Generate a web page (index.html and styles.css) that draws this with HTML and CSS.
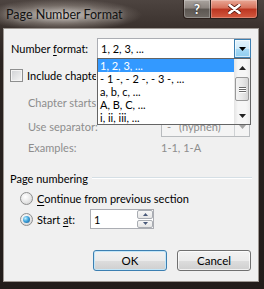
FILE: index.html
```html
<!DOCTYPE html>
<html lang="en">
<head>
    <meta charset="UTF-8">
    <title>Page Number Format</title>
    <link rel="stylesheet" href="styles.css">
</head>
<body>
    <div class="window">
        <!-- Title bar -->
        <div class="titlebar">
            <span class="title">Page Number Format</span>
            <div class="caption-buttons">
                <div class="cap-btn help">?</div>
                <div class="cap-btn close">
                    <svg width="13" height="10" viewBox="0 0 13 10"><path d="M1.5 1 L11.5 9 M11.5 1 L1.5 9" stroke="#5a1a10" stroke-width="4.2" stroke-linecap="round"/><path d="M1.5 1 L11.5 9 M11.5 1 L1.5 9" stroke="#fff" stroke-width="2.6" stroke-linecap="round"/></svg>
                </div>
            </div>
        </div>

        <div class="client">
            <!-- Number format -->
            <div class="row row-format">
                <span class="label label-format">Number <u>f</u>ormat:</span>
                <div class="combo combo-format">
                    <span class="combo-text">1, 2, 3, ...</span>
                    <span class="combo-btn combo-btn-hot">
                        <svg width="7" height="4" viewBox="0 0 7 4"><path d="M0 0h7L3.5 4z" fill="#000"/></svg>
                    </span>

                    <div class="droplist">
                        <ul class="options">
                            <li class="selected">1, 2, 3, ...</li>
                            <li>- 1 -, - 2 -, - 3 -, ...</li>
                            <li>a, b, c, ...</li>
                            <li>A, B, C, ...</li>
                            <li>i, ii, iii, ...</li>
                        </ul>
                        <div class="scrollbar">
                            <span class="sb-arrow">
                                <svg width="7" height="4" viewBox="0 0 7 4"><path d="M0 4h7L3.5 0z" fill="#222"/></svg>
                            </span>
                            <span class="sb-thumb"><i></i><i></i><i></i></span>
                            <span class="sb-space"></span>
                            <span class="sb-arrow">
                                <svg width="7" height="4" viewBox="0 0 7 4"><path d="M0 0h7L3.5 4z" fill="#222"/></svg>
                            </span>
                        </div>
                    </div>
                </div>
            </div>

            <!-- Include chapter number -->
            <div class="row row-check">
                <span class="checkbox"></span>
                <span class="label label-clip">Include chapter <u>n</u>umber</span>
            </div>

            <div class="row row-indent row-chapter">
                <span class="label label-clip disabled">Chapter starts with style:</span>
            </div>

            <div class="row row-indent row-separator">
                <span class="label label-wide disabled">Use separator:</span>
                <div class="combo combo-separator">
                    <span class="combo-text disabled"><span class="dash">-</span>(hyphen)</span>
                    <span class="combo-btn combo-btn-off">
                        <svg width="7" height="4" viewBox="0 0 7 4"><path d="M0 0h7L3.5 4z" fill="#a3a3a3"/></svg>
                    </span>
                </div>
            </div>

            <div class="row row-indent row-examples">
                <span class="label label-wide disabled">Examples:</span>
                <span class="label disabled">1-1, 1-A</span>
            </div>

            <!-- Page numbering group -->
            <div class="row row-group">
                <span class="label">Page numbering</span>
                <span class="group-line"></span>
            </div>

            <div class="row row-radio">
                <span class="radio"></span>
                <span class="label"><u>C</u>ontinue from previous section</span>
            </div>

            <div class="row row-radio row-start">
                <span class="radio checked"></span>
                <span class="label label-start">Start <u>a</u>t:</span>
                <div class="spin">
                    <span class="spin-text">1</span>
                    <span class="spin-btns">
                        <span class="spin-btn">
                            <svg width="5" height="3" viewBox="0 0 5 3"><path d="M0 3h5L2.5 0z" fill="#4a5a7a"/></svg>
                        </span>
                        <span class="spin-btn">
                            <svg width="5" height="3" viewBox="0 0 5 3"><path d="M0 0h5L2.5 3z" fill="#4a5a7a"/></svg>
                        </span>
                    </span>
                </div>
            </div>

            <div class="row row-buttons">
                <button class="button default">OK</button>
                <button class="button">Cancel</button>
            </div>
        </div>
    </div>
</body>
</html>
```

FILE: styles.css
```css
/* Windows 7 style dialog */
* {
    box-sizing: border-box;
}

body {
    margin: 0;
    width: 264px;
    height: 289px;
    overflow: hidden;
    background: #2a2320;
    font-family: 'Lato', sans-serif;
    font-size: 11px;
    color: #000;
}

.window {
    height: 289px;
    display: flex;
    flex-direction: column;
    background:
        radial-gradient(ellipse 80px 16px at 62px 15px, rgba(205, 199, 193, 0.95), rgba(150, 141, 134, 0.55) 60%, rgba(60, 50, 45, 0) 100%),
        linear-gradient(180deg, #4d4440 0, #3a312d 28px, #2a2320 60px, #221c1a 100%);
}

/* Title bar */
.titlebar {
    height: 29px;
    flex-shrink: 0;
    display: flex;
    justify-content: space-between;
    align-items: flex-start;
    padding: 0 6px;
}

.title {
    line-height: 30px;
    font-size: 12.5px;
    color: #111;
    text-shadow: 0 0 6px rgba(255, 255, 255, 0.6);
}

.caption-buttons {
    display: flex;
    height: 19px;
}

.cap-btn {
    height: 19px;
    border: 1px solid #2b1f1b;
    border-top: none;
    display: flex;
    align-items: center;
    justify-content: center;
    box-shadow: inset 0 0 0 1px rgba(255, 255, 255, 0.25);
}

.help {
    width: 28px;
    border-radius: 0 0 0 4px;
    background: linear-gradient(180deg, #aaa49f 0, #8b847f 45%, #5c5651 50%, #6f6964 100%);
    color: #fff;
    font-weight: bold;
    font-size: 13px;
    text-shadow: 0 0 2px #222;
}

.close {
    width: 48px;
    margin-left: -1px;
    border-radius: 0 0 4px 0;
    background: linear-gradient(180deg, #e9a896 0, #d6705a 45%, #bb3520 50%, #d45a40 100%);
}

/* Client area */
.client {
    height: 252px;
    margin: 0 6px 0 4px;
    padding-top: 9px;
    background: #f0f0f0;
    box-shadow: 0 0 0 1px #9d9792;
    display: flex;
    flex-direction: column;
}

.row {
    display: flex;
    align-items: center;
    height: 20px;
    padding-left: 7px;
}

.label {
    white-space: nowrap;
}

/* text that runs under the open list is cut where the list starts */
.label-clip {
    overflow: hidden;
}

.row-check .label-clip {
    width: 69px;
}

.row-chapter .label-clip {
    width: 68px;
}

.label u {
    text-decoration-thickness: 1px;
    text-underline-offset: 2px;
}

.disabled {
    color: #8d8d8d;
}

.row-format {
    height: 21px;
}

.label-format {
    width: 86px;
}

.row-check {
    height: 21px;
    margin-top: 6px;
    padding-left: 6px;
}

.row-indent {
    padding-left: 24px;
}

.row-chapter {
    margin-top: 6px;
}

.row-separator {
    height: 21px;
    margin-top: 4px;
}

.label-wide {
    width: 133px;
}

.row-group {
    margin-top: 11px;
    padding-left: 6px;
    padding-right: 6px;
}

.group-line {
    flex: 1;
    height: 2px;
    margin: 0 0 0 4px;
    border-top: 1px solid #d5dfe5;
    border-bottom: 1px solid #fff;
}

.row-radio {
    padding-left: 16px;
}

.row-start {
    margin-top: 1px;
}

.label-start {
    width: 53px;
}

.row-buttons {
    height: 21px;
    margin-top: 21px;
    padding-right: 7px;
    justify-content: flex-end;
    gap: 10px;
}

/* Combo boxes */
.combo {
    position: relative;
    height: 21px;
    display: flex;
    align-items: center;
    border: 1px solid #abadb3;
    background: #fff;
}

.combo-format {
    width: 154px;
}

.combo-separator {
    width: 89px;
    border-color: #b8bbbe;
    background: #f4f4f4;
}

.combo-text {
    flex: 1;
    padding-left: 3px;
    white-space: nowrap;
}

.dash {
    display: inline-block;
    width: 14px;
    padding-left: 2px;
}

.combo-btn {
    width: 17px;
    height: 19px;
    display: flex;
    align-items: center;
    justify-content: center;
}

.combo-btn-hot {
    border: 1px solid #3c7fb1;
    background: linear-gradient(180deg, #e3f3fc 0, #cfeafa 50%, #a9daf5 51%, #8fcdef 100%);
    box-shadow: inset 0 0 0 1px rgba(255, 255, 255, 0.6);
    margin-right: -1px;
}

.combo-btn-off {
    width: 15px;
    border-left: 1px solid #cfd2d4;
}

/* Dropdown list over the dialog */
.droplist {
    position: absolute;
    top: 19px;
    left: -1px;
    width: 154px;
    height: 67px;
    z-index: 5;
    display: flex;
    background: #fff;
    border: 1px solid #646464;
}

.options {
    flex: 1;
    margin: 0;
    padding: 0;
    list-style: none;
}

.options li {
    height: 13px;
    line-height: 13px;
    padding-left: 2px;
    white-space: nowrap;
    overflow: hidden;
}

.options li.selected {
    background: #3399ff;
    color: #fff;
}

.scrollbar {
    width: 16px;
    display: flex;
    flex-direction: column;
    background: linear-gradient(90deg, #e4e4e4 0, #f6f6f6 25%, #f6f6f6 75%, #ececec 100%);
}

.sb-arrow {
    height: 17px;
    display: flex;
    align-items: center;
    justify-content: center;
}

.sb-thumb {
    height: 24px;
    margin: 1px 1px 0;
    border: 1px solid #999;
    border-radius: 2px;
    background: linear-gradient(90deg, #f3f3f3 0, #e8e8e8 50%, #d6d6d6 100%);
    display: flex;
    flex-direction: column;
    align-items: center;
    justify-content: center;
    gap: 1px;
}

.sb-thumb i {
    width: 7px;
    height: 1px;
    background: #6a6a6a;
    box-shadow: 0 1px 0 #fff;
}

.sb-space {
    flex: 1;
}

/* Checkbox and radio buttons */
.checkbox {
    width: 13px;
    height: 13px;
    margin-right: 4px;
    border: 1px solid #8e8f8f;
    background: linear-gradient(135deg, #cfd1d4 0, #f6f6f6 100%);
    box-shadow: inset 0 0 0 1px #f4f4f4;
}

.radio {
    position: relative;
    width: 13px;
    height: 13px;
    margin-right: 4px;
    border-radius: 50%;
    border: 1px solid #8e8f8f;
    background: radial-gradient(circle at 40% 35%, #ffffff 0, #e6e6e6 55%, #c9c9c9 100%);
}

.radio.checked::after {
    content: '';
    position: absolute;
    top: 2px;
    left: 2px;
    width: 7px;
    height: 7px;
    border-radius: 50%;
    background: radial-gradient(circle at 35% 35%, #c2f0ff 0, #3ea4dc 45%, #18538c 100%);
}

/* Spin box */
.spin {
    width: 64px;
    height: 20px;
    display: flex;
    align-items: center;
    border: 1px solid #abadb3;
    background: #fff;
}

.spin-text {
    flex: 1;
    padding-left: 3px;
}

.spin-btns {
    width: 16px;
    height: 18px;
    display: flex;
    flex-direction: column;
    gap: 1px;
}

.spin-btn {
    flex: 1;
    display: flex;
    align-items: center;
    justify-content: center;
    border: 1px solid #a9adb3;
    border-radius: 2px;
    background: linear-gradient(180deg, #f7f7f7 0, #e6e6e6 100%);
}

/* Push buttons */
.button {
    width: 74px;
    height: 21px;
    padding: 0;
    font-family: inherit;
    font-size: 11.5px;
    color: #000;
    border: 1px solid #707070;
    border-radius: 3px;
    background: linear-gradient(180deg, #f2f2f2 0, #ebebeb 50%, #dddddd 51%, #cfcfcf 100%);
    box-shadow: inset 0 0 0 1px rgba(255, 255, 255, 0.7);
}

.button.default {
    border-color: #3c7fb1;
    box-shadow: inset 0 0 0 1px #c3e6f8;
}
```
